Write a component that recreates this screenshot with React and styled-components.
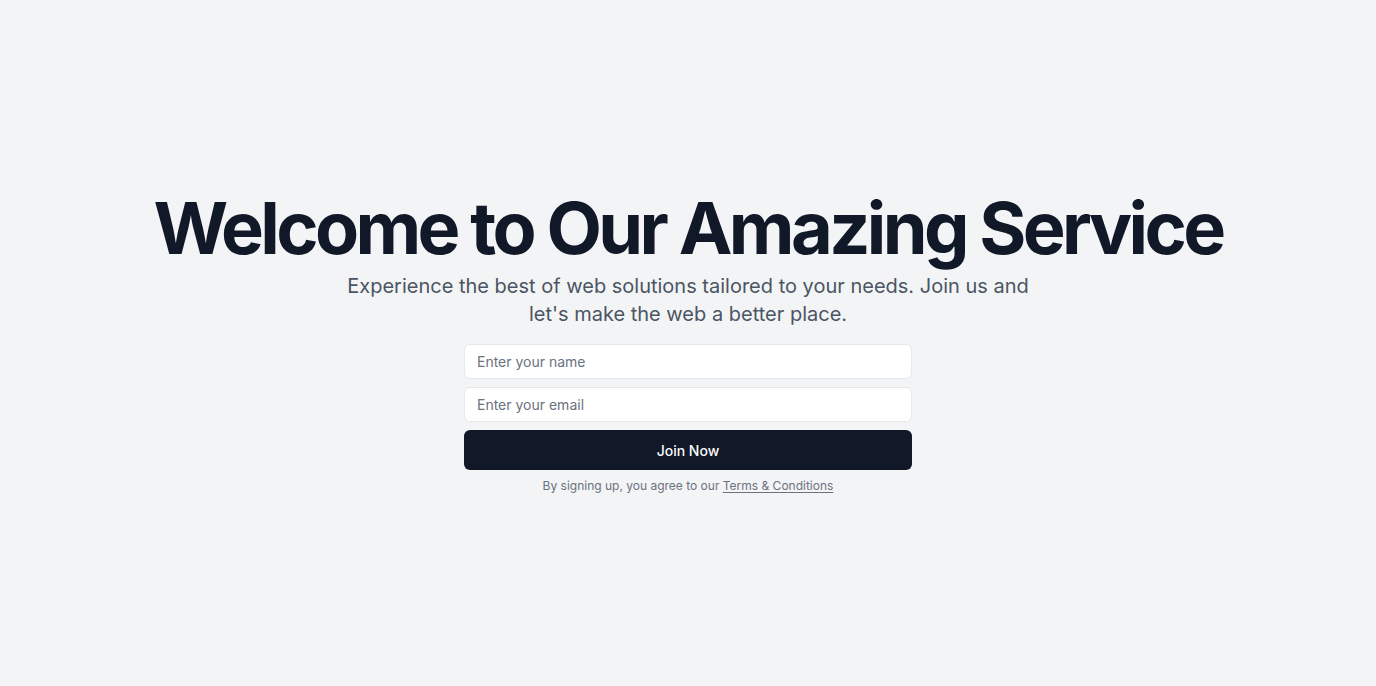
import React from "react";
import styled, { createGlobalStyle } from "styled-components";

const Global = createGlobalStyle`
  * { box-sizing: border-box; }
  html, body { margin: 0; padding: 0; }
  body {
    background: #f3f4f6;
    font-family: Inter, "Noto Sans", sans-serif;
    color: #111827;
  }
`;

const Page = styled.main`
  min-height: 100vh;
  display: flex;
  align-items: center;
  justify-content: center;
  padding: 0 16px;
`;

const Content = styled.section`
  display: flex;
  flex-direction: column;
  align-items: center;
  text-align: center;
  gap: 16px;
`;

const Header = styled.div`
  display: flex;
  flex-direction: column;
  align-items: center;
  gap: 8px;
`;

const Title = styled.h1`
  margin: 0;
  font-size: 72px;
  line-height: 1;
  font-weight: 700;
  letter-spacing: -0.05em;
  color: #111827;
`;

const Subtitle = styled.p`
  margin: 0;
  max-width: 700px;
  font-size: 20px;
  line-height: 28px;
  color: #4b5563;
`;

const FormBox = styled.div`
  width: 448px;
  display: flex;
  flex-direction: column;
  gap: 8px;
`;

const Form = styled.form`
  display: flex;
  flex-direction: column;
  gap: 8px;
`;

const Input = styled.input`
  height: 35px;
  width: 100%;
  border: 1px solid #e5e7eb;
  border-radius: 6px;
  background: #ffffff;
  padding: 0 12px;
  font-family: Inter, sans-serif;
  font-size: 14px;
  color: #111827;
  outline: none;
  &::placeholder { color: #6b7280; }
`;

const Button = styled.button`
  height: 40px;
  width: 100%;
  border: none;
  border-radius: 6px;
  background: #111827;
  color: #f9fafb;
  font-family: Inter, sans-serif;
  font-size: 14px;
  font-weight: 500;
  cursor: pointer;
`;

const Note = styled.p`
  margin: 0;
  font-size: 12px;
  line-height: 16px;
  color: #6b7280;
`;

const Link = styled.a`
  color: #6b7280;
  text-decoration: underline;
  text-underline-offset: 2px;
`;

export default function App() {
  return (
    <>
      <Global />
      <Page>
        <Content>
          <Header>
            <Title>Welcome to Our Amazing Service</Title>
            <Subtitle>
              Experience the best of web solutions tailored to your needs. Join us and let's make the web a better place.
            </Subtitle>
          </Header>
          <FormBox>
            <Form onSubmit={(e) => e.preventDefault()}>
              <Input placeholder="Enter your name" type="text" />
              <Input placeholder="Enter your email" type="email" />
              <Button type="submit">Join Now</Button>
            </Form>
            <Note>
              By signing up, you agree to our <Link href="#">Terms &amp; Conditions</Link>
            </Note>
          </FormBox>
        </Content>
      </Page>
    </>
  );
}
